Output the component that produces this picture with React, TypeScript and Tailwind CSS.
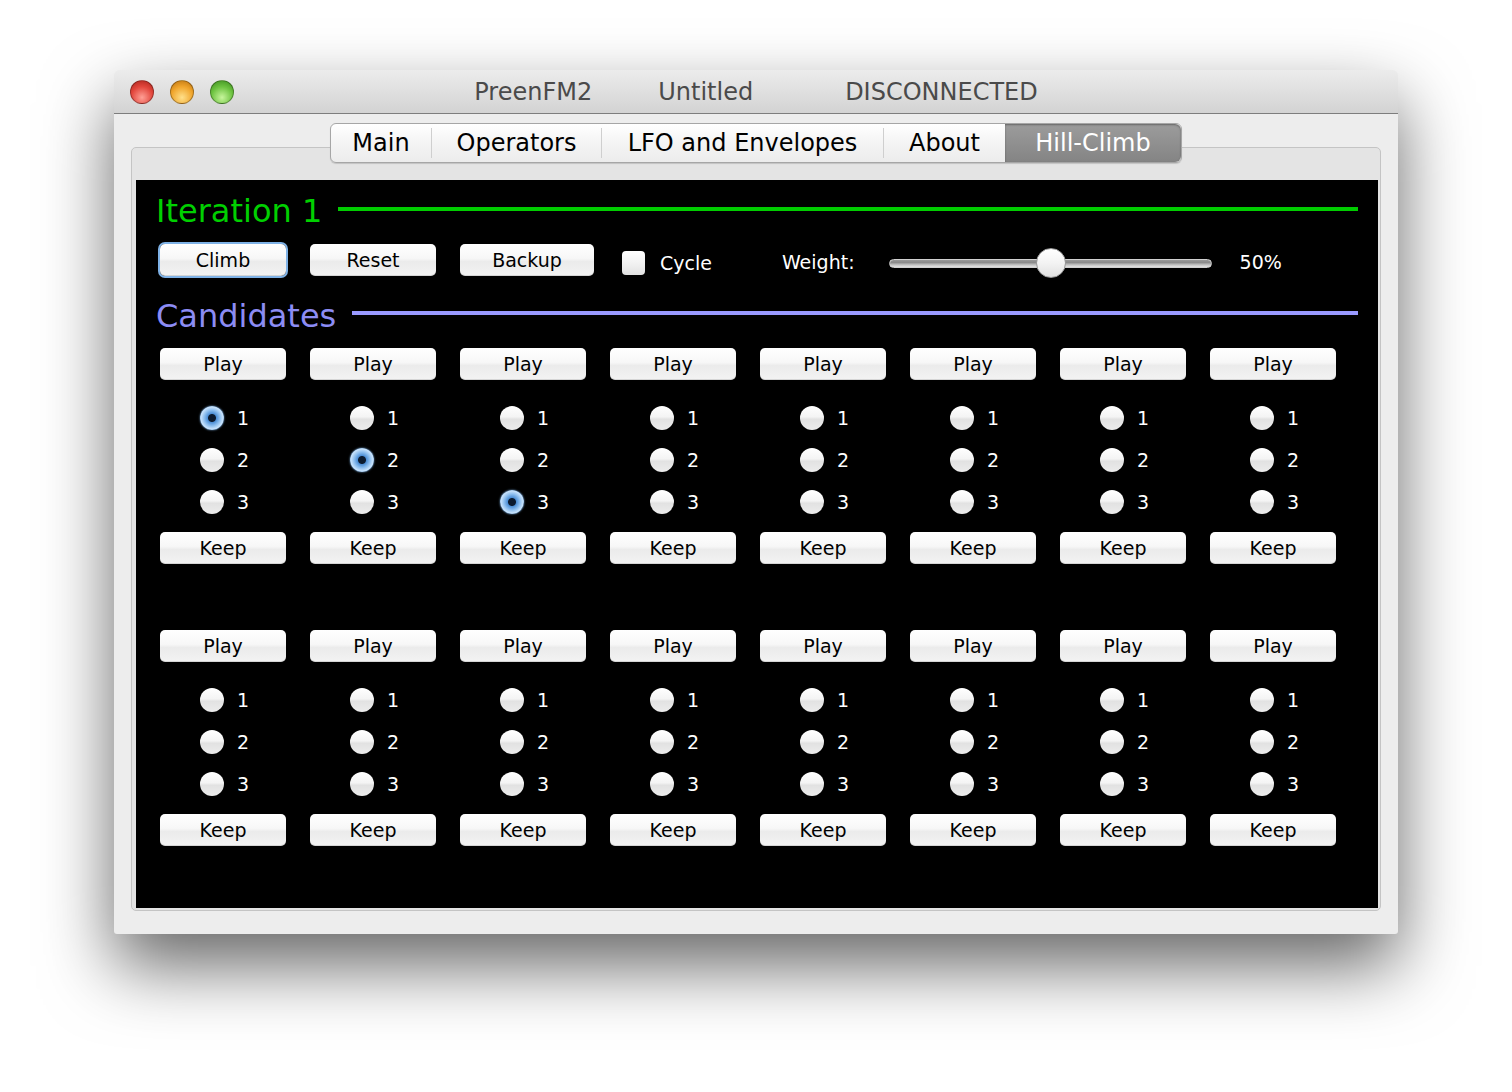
import React from "react";

const tabs = [
  { label: "Main", w: "w-[100px]" },
  { label: "Operators", w: "w-[170px]" },
  { label: "LFO and Envelopes", w: "w-[282px]" },
  { label: "About", w: "w-[122px]" },
];

const btn =
  "flex items-center justify-center h-[32px] rounded-[5px] bg-[linear-gradient(#ffffff,#f7f7f7_45%,#ebebeb_55%,#f3f3f3)] text-[19px] text-black shadow-[inset_0_-1px_0_rgba(0,0,0,0.12)]";

const Button = ({ label, w = "w-[126px]", focus = false }: { label: string; w?: string; focus?: boolean }) => (
  <div className={`${btn} ${w} ${focus ? "ring-2 ring-[#7fb2e6]" : ""}`}>{label}</div>
);

const Radio = ({ on, n }: { on: boolean; n: number }) => (
  <div className="flex items-center h-[24px] pl-[40px]">
    {on ? (
      <div className="w-[24px] h-[24px] rounded-full bg-[radial-gradient(circle,#0b1a2e_0_3.5px,#4f90d6_4.5px,#8fc0f0_8px,#c8e2fb_11px,#9cc6ef_12px)] shadow-[0_0_2px_#7fb2e6]" />
    ) : (
      <div className="w-[24px] h-[24px] rounded-full bg-[linear-gradient(#ffffff,#f4f4f4_45%,#e2e2e2_55%,#ececec)]" />
    )}
    <span className="ml-[13px] text-[19px] text-white leading-none">{n}</span>
  </div>
);

const Candidate = ({ sel }: { sel: number }) => (
  <div className="flex flex-col w-[126px]">
    <Button label="Play" />
    <div className="flex flex-col gap-[18px] mt-[26px]">
      {[1, 2, 3].map((n) => (
        <Radio key={n} n={n} on={n === sel} />
      ))}
    </div>
    <div className="mt-[18px]">
      <Button label="Keep" />
    </div>
  </div>
);

const Light = ({ c }: { c: string }) => <div className={`w-[24px] h-[24px] rounded-full border border-black/30 ${c}`} />;

export default function App() {
  return (
    <div className="min-h-screen bg-white pt-[70px] pl-[114px] font-['DejaVu_Sans',sans-serif]">
      <div className="w-[1284px] h-[864px] flex flex-col rounded-t-[6px] rounded-b-[3px] bg-[#ededed] shadow-[0_32px_70px_rgba(0,0,0,0.6)] overflow-hidden">
        {/* title bar */}
        <div className="relative h-[44px] flex items-center justify-center border-b border-[#7d7d7d] bg-[linear-gradient(#ececec,#d3d3d3)] text-[24px] text-[#4a4a4a]">
          <div className="absolute left-[16px] top-[10px] flex gap-[16px]">
            <Light c="bg-[radial-gradient(circle_at_50%_75%,#ff9f95,#e2463c_55%,#a9231b)]" />
            <Light c="bg-[radial-gradient(circle_at_50%_75%,#ffe08a,#f0a52c_55%,#b9700f)]" />
            <Light c="bg-[radial-gradient(circle_at_50%_75%,#c7f59c,#6cc23f_55%,#3b8a1d)]" />
          </div>
          <span>PreenFM2</span>
          <span className="ml-[66px]">Untitled</span>
          <span className="ml-[92px]">DISCONNECTED</span>
        </div>

        <div className="flex flex-col px-[17px] pt-[9px]">
          {/* tabs */}
          <div className="relative z-10 self-center flex h-[40px] mb-[-16px] rounded-[6px] border border-[#a6a6a6] bg-[linear-gradient(#ffffff,#f4f4f4_50%,#ececec)] text-[24px] text-black shadow-[0_1px_1px_rgba(0,0,0,0.15)]">
            {tabs.map((t, i) => (
              <div key={t.label} className={`flex items-center justify-center ${t.w} ${i > 0 ? "border-l border-[#cfcfcf] my-[4px]" : ""}`}>
                <span className={i > 0 ? "mt-[-8px] mb-[-8px]" : ""}>{t.label}</span>
              </div>
            ))}
            <div className="flex items-center justify-center w-[176px] rounded-r-[6px] bg-[linear-gradient(#9c9c9c,#848484)] text-white shadow-[inset_0_1px_2px_rgba(0,0,0,0.35)]">
              Hill-Climb
            </div>
          </div>

          {/* panel */}
          <div className="h-[764px] rounded-[5px] border border-[#c4c4c4] bg-[#e4e4e4] pt-[32px] pl-[4px] pr-[2px] pb-[2px]">
            <div className="h-full bg-black flex flex-col px-[20px] pt-[11px]">
              <div className="flex items-center h-[40px]">
                <span className="text-[32px] text-[#00d000] leading-[40px]">Iteration 1</span>
                <div className="flex-1 h-[4px] ml-[16px] mb-[4px] bg-[#00cc00]" />
              </div>

              <div className="flex items-center h-[34px] mt-[12px] pl-[4px] text-[19px] text-white">
                <Button label="Climb" focus />
                <div className="ml-[24px]">
                  <Button label="Reset" />
                </div>
                <div className="ml-[24px]">
                  <Button label="Backup" w="w-[134px]" />
                </div>
                <div className="ml-[28px] mt-[6px] w-[23px] h-[24px] rounded-[4px] bg-[linear-gradient(#ffffff,#f2f2f2_50%,#e2e2e2)]" />
                <span className="ml-[15px] mt-[6px]">Cycle</span>
                <span className="ml-[70px] mt-[4px]">Weight:</span>
                <div className="relative ml-[34px] mt-[6px] w-[323px] h-[9px] rounded-full border border-[#d0d0d0] bg-[linear-gradient(#9a9a9a,#8a8a8a_35%,#c4c4c4_70%,#e2e2e2)]">
                  <div className="absolute left-[146px] top-[-12px] w-[30px] h-[30px] rounded-full border border-[#9a9a9a] bg-[linear-gradient(#ffffff,#f3f3f3_50%,#e0e0e0)]" />
                </div>
                <span className="ml-[28px] mt-[4px]">50%</span>
              </div>

              <div className="flex items-center h-[40px] mt-[19px]">
                <span className="text-[32px] text-[#8c8cf4] leading-[40px]">Candidates</span>
                <div className="flex-1 h-[4px] ml-[16px] mb-[6px] bg-[#9999ff]" />
              </div>

              <div className="grid grid-cols-8 gap-x-[24px] gap-y-[66px] mt-[12px] pl-[4px] w-[1180px]">
                {[1, 2, 3, 0, 0, 0, 0, 0, 0, 0, 0, 0, 0, 0, 0, 0].map((s, i) => (
                  <Candidate key={i} sel={s} />
                ))}
              </div>
            </div>
          </div>
        </div>
      </div>
    </div>
  );
}
